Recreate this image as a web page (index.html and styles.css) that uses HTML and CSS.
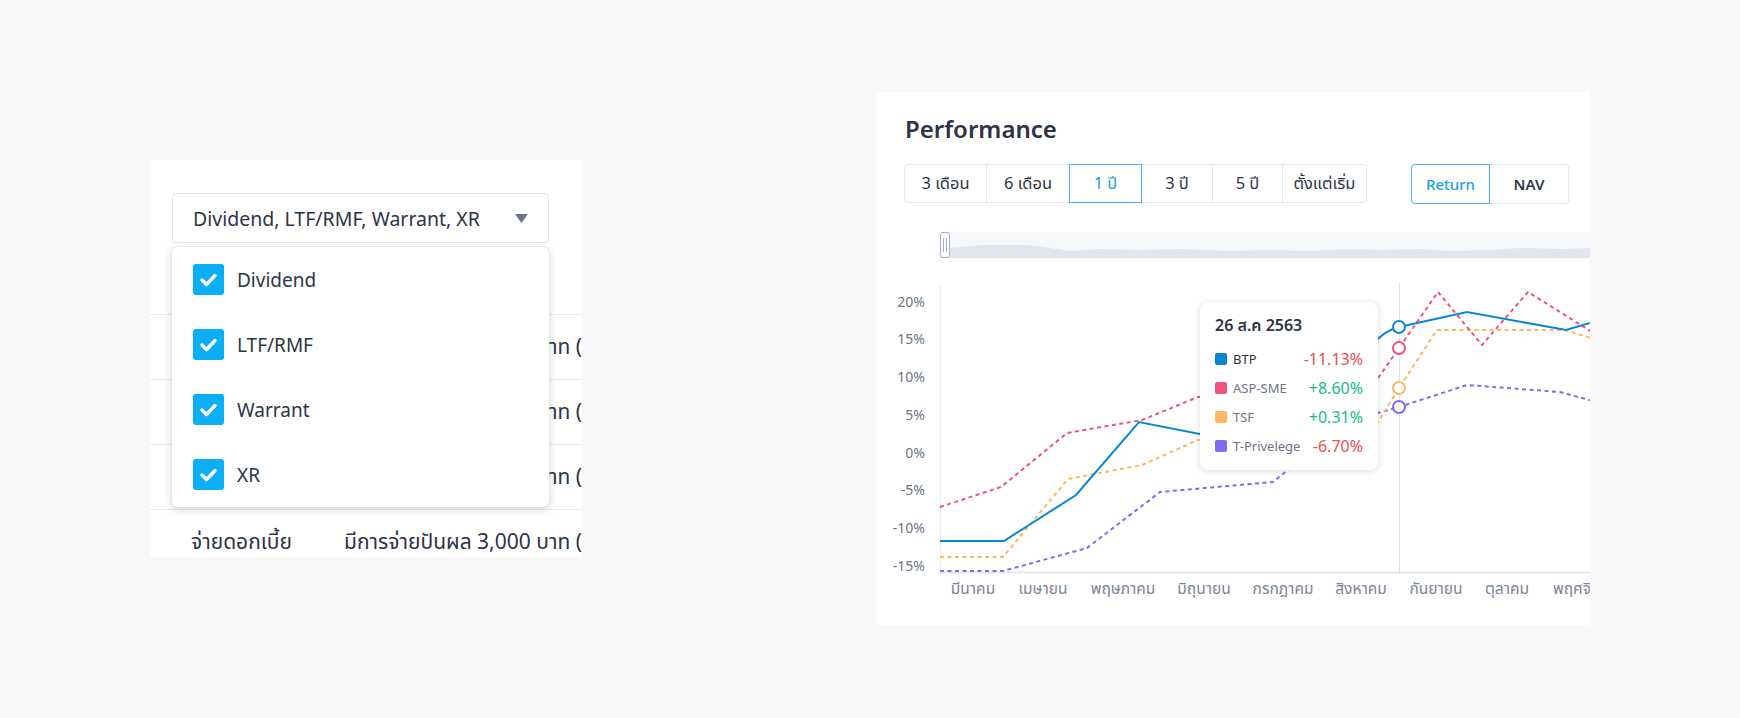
FILE: index.html
```html
<!DOCTYPE html>
<html lang="th">
<head>
<meta charset="utf-8">
<title>Filter and Performance</title>
<link rel="stylesheet" href="styles.css">
</head>
<body>
<div class="stage">
  <section class="filter-card">
    <div class="filter-head">
      <div class="select">
        <span class="select-text">Dividend, LTF/RMF, Warrant, XR</span>
        <svg class="caret" width="13" height="9" viewBox="0 0 13 9"><polygon points="0,0 13,0 6.5,9" fill="#6b7386"/></svg>
      </div>
    </div>
    <div class="row"><span class="row-label">จ่ายปันผล</span><span class="row-value">มีการจ่ายปันผล 3,000 บาท (0.50 บาท/หุ้น)</span></div>
    <div class="row"><span class="row-label">จ่ายปันผล</span><span class="row-value">มีการจ่ายปันผล 3,000 บาท (0.50 บาท/หุ้น)</span></div>
    <div class="row"><span class="row-label">จ่ายปันผล</span><span class="row-value">มีการจ่ายปันผล 3,000 บาท (0.50 บาท/หุ้น)</span></div>
    <div class="row"><span class="row-label">จ่ายดอกเบี้ย</span><span class="row-value">มีการจ่ายปันผล 3,000 บาท (0.50 บาท/หุ้น)</span></div>

    <div class="menu">
      <div class="menu-item"><span class="check"><svg width="31" height="31" viewBox="0 0 31 31"><path d="M9 16 L13.5 20.5 L22 11.5" fill="none" stroke="#fff" stroke-width="3.4" stroke-linecap="round" stroke-linejoin="round"/></svg></span><span>Dividend</span></div>
      <div class="menu-item"><span class="check"><svg width="31" height="31" viewBox="0 0 31 31"><path d="M9 16 L13.5 20.5 L22 11.5" fill="none" stroke="#fff" stroke-width="3.4" stroke-linecap="round" stroke-linejoin="round"/></svg></span><span>LTF/RMF</span></div>
      <div class="menu-item"><span class="check"><svg width="31" height="31" viewBox="0 0 31 31"><path d="M9 16 L13.5 20.5 L22 11.5" fill="none" stroke="#fff" stroke-width="3.4" stroke-linecap="round" stroke-linejoin="round"/></svg></span><span>Warrant</span></div>
      <div class="menu-item"><span class="check"><svg width="31" height="31" viewBox="0 0 31 31"><path d="M9 16 L13.5 20.5 L22 11.5" fill="none" stroke="#fff" stroke-width="3.4" stroke-linecap="round" stroke-linejoin="round"/></svg></span><span>XR</span></div>
    </div>
  </section>

  <section class="perf-card">
    <h2 class="perf-title">Performance</h2>
    <div class="controls">
      <div class="seg">
        <button class="seg-btn">3 เดือน</button>
        <button class="seg-btn">6 เดือน</button>
        <button class="seg-btn active">1 ปี</button>
        <button class="seg-btn">3 ปี</button>
        <button class="seg-btn">5 ปี</button>
        <button class="seg-btn">ตั้งแต่เริ่ม</button>
      </div>
      <div class="toggle">
        <button class="tog-btn active">Return</button>
        <button class="tog-btn">NAV</button>
      </div>
    </div>

    <svg class="chart" width="714" height="393" viewBox="876 232 714 393">
      <!-- navigator -->
      <rect x="940" y="232" width="660" height="26" fill="#f5f7fb"/>
      <path d="M949,258 L949,248 L980,245 L1027,245 L1050,248 L1070,251 L1100,249 L1140,250 L1180,249 L1230,251 L1270,250 L1310,251 L1350,249 L1380,250 L1420,249 L1450,251 L1490,250 L1520,248 L1560,249 L1600,248 L1600,258 Z" fill="#e2e5ed"/>
      <rect x="940.5" y="232.5" width="9" height="25" rx="2.5" fill="#fff" stroke="#a7aec0"/>
      <line x1="943.5" y1="238" x2="943.5" y2="252" stroke="#a7aec0"/>
      <line x1="946.5" y1="238" x2="946.5" y2="252" stroke="#a7aec0"/>

      <!-- axes -->
      <line x1="940.5" y1="283" x2="940.5" y2="572" stroke="#eceef3"/>
      <line x1="940" y1="572.5" x2="1600" y2="572.5" stroke="#e6e8ee" stroke-width="2"/>
      <g class="ylab" text-anchor="end">
        <text x="925" y="307">20%</text>
        <text x="925" y="344">15%</text>
        <text x="925" y="382">10%</text>
        <text x="925" y="420">5%</text>
        <text x="925" y="458">0%</text>
        <text x="925" y="495">-5%</text>
        <text x="925" y="533">-10%</text>
        <text x="925" y="571">-15%</text>
      </g>
      <g class="xlab" text-anchor="middle">
        <text x="973" y="594">มีนาคม</text>
        <text x="1043" y="594">เมษายน</text>
        <text x="1123" y="594">พฤษภาคม</text>
        <text x="1204" y="594">มิถุนายน</text>
        <text x="1283" y="594">กรกฎาคม</text>
        <text x="1361" y="594">สิงหาคม</text>
        <text x="1436" y="594">กันยายน</text>
        <text x="1507" y="594">ตุลาคม</text>
        <text x="1553" y="594" text-anchor="start">พฤศจิกายน</text>
      </g>

      <!-- crosshair -->
      <line x1="1399.5" y1="283" x2="1399.5" y2="572" stroke="#dfe1e6"/>

      <!-- series -->
      <path d="M940,571 L1003,571 L1087,548 L1160,492 L1273,482 L1300,460 L1378,413 L1399,407 L1467,385 L1560,392 L1600,403" fill="none" stroke="#8169f4" stroke-width="2" stroke-dasharray="4 3.5"/>
      <path d="M940,557 L1003,557 L1068,479 L1142,465 L1198,440 L1300,440 L1378,422 L1399,388 L1437,330 L1565,330 L1600,341" fill="none" stroke="#ffb661" stroke-width="2" stroke-dasharray="4 3.5"/>
      <path d="M940,507 L1001,487 L1067,433 L1142,420 L1198,397 L1300,400 L1360,404 L1399,348 L1438,292 L1482,345 L1528,292 L1600,337" fill="none" stroke="#f2527e" stroke-width="2" stroke-dasharray="4 3.5"/>
      <path d="M940,541 L1004,541 L1076,495 L1139,422 L1230,440 L1372,345 Q1385,330 1399,327 L1467,312 L1566,330 L1600,320" fill="none" stroke="#0a87d3" stroke-width="2"/>

      <!-- markers -->
      <circle cx="1399" cy="407" r="6" fill="#fff" stroke="#8169f4" stroke-width="2"/>
      <circle cx="1399" cy="388" r="6" fill="#fff" stroke="#ffb661" stroke-width="2"/>
      <circle cx="1399" cy="348" r="6" fill="#fff" stroke="#f2527e" stroke-width="2"/>
      <circle cx="1399" cy="327" r="6" fill="#fff" stroke="#0a87d3" stroke-width="2"/>
    </svg>

    <div class="tooltip">
      <div class="tip-title">26 ส.ค 2563</div>
      <div class="tip-row"><span class="sw sw-btp"></span><span class="tip-name strong">BTP</span><span class="tip-val neg">-11.13%</span></div>
      <div class="tip-row"><span class="sw sw-asp"></span><span class="tip-name">ASP-SME</span><span class="tip-val pos">+8.60%</span></div>
      <div class="tip-row"><span class="sw sw-tsf"></span><span class="tip-name">TSF</span><span class="tip-val pos">+0.31%</span></div>
      <div class="tip-row"><span class="sw sw-tp"></span><span class="tip-name">T-Privelege</span><span class="tip-val neg">-6.70%</span></div>
    </div>
  </section>
</div>
</body>
</html>
```

FILE: styles.css
```css
* { box-sizing: border-box; margin: 0; padding: 0; }

html, body {
  width: 1740px;
  height: 718px;
  overflow: hidden;
}

body {
  background: #f9f9f9;
  font-family: "Noto Sans", "Noto Sans Thai", "Noto Sans Thai UI", sans-serif;
  color: #2d3446;
}

.stage {
  display: flex;
  align-items: flex-start;
  padding: 92px 0 0 150px;
  gap: 294px;
}

/* ---------- left: filter card ---------- */
.filter-card {
  margin-top: 68px;
  width: 432px;
  height: 397px;
  background: #fff;
  position: relative;
  overflow: hidden;
}

.filter-head {
  height: 154px;
  padding: 33px 0 0 22px;
}

.select {
  width: 377px;
  height: 50px;
  border: 1px solid #e2e5eb;
  border-radius: 4px;
  display: flex;
  align-items: center;
  justify-content: space-between;
  padding: 0 20px 0 20px;
  font-size: 19.5px;
  color: #2d3446;
}

.caret { display: block; }

.row {
  height: 65px;
  border-top: 1px solid #e9ebf0;
  display: flex;
  align-items: center;
  white-space: nowrap;
  font-size: 21px;
  color: #2d3446;
}

.row-label {
  flex: none;
  width: 194px;
  padding-left: 41px;
}

.row-value { flex: none; }

.menu {
  position: absolute;
  left: 22px;
  top: 87px;
  width: 377px;
  background: #fff;
  border-radius: 6px;
  box-shadow: 0 2px 8px rgba(30, 40, 60, 0.22), 0 0 1px rgba(30, 40, 60, 0.15);
}

.menu-item {
  height: 65px;
  display: flex;
  align-items: center;
  padding-left: 21px;
  gap: 13px;
  font-size: 19px;
  color: #2d3446;
}

.check {
  width: 31px;
  height: 31px;
  border-radius: 3px;
  background: #0aaef4;
  display: flex;
}

/* ---------- right: performance card ---------- */
.perf-card {
  width: 714px;
  height: 533px;
  background: #fff;
  position: relative;
  overflow: hidden;
}

.perf-title {
  padding: 21px 0 0 29px;
  font-size: 24px;
  line-height: 32px;
  font-weight: 600;
  color: #2b3344;
}

.controls {
  display: flex;
  align-items: flex-start;
  gap: 44px;
  padding-left: 28px;
  margin-top: 19px;
  height: 40px;
}

.seg { display: flex; }

.seg-btn, .tog-btn {
  font-family: inherit;
  background: #fff;
  border: 1px solid #e3e6ec;
  color: #2f3747;
  font-size: 15px;
  display: flex;
  align-items: center;
  justify-content: center;
  position: relative;
}

.seg-btn {
  height: 39px;
  margin-left: -1px;
  font-size: 16.5px;
}

.seg-btn:first-child { margin-left: 0; border-radius: 4px 0 0 4px; width: 83px; }
.seg-btn:nth-child(2) { width: 84px; }
.seg-btn:nth-child(3) { width: 73px; }
.seg-btn:nth-child(4) { width: 72px; }
.seg-btn:nth-child(5) { width: 71px; }
.seg-btn:last-child { border-radius: 0 4px 4px 0; width: 85px; }

.seg-btn.active {
  border-color: #47b3ee;
  color: #1c9fe3;
  z-index: 1;
}

.toggle { display: flex; }

.tog-btn {
  width: 79px;
  height: 40px;
  font-weight: 600;
}

.tog-btn:first-child { border-radius: 4px 0 0 4px; }
.tog-btn:last-child { border-radius: 0 4px 4px 0; border-left: none; }

.tog-btn.active {
  border-color: #47b3ee;
  color: #1c9fe3;
  font-weight: 500;
}

.chart {
  display: block;
  margin-top: 28px;
}

.ylab text {
  font-family: "Noto Sans", sans-serif;
  font-size: 14px;
  fill: #6d7587;
}

.xlab text {
  font-family: "Noto Sans", "Noto Sans Thai", sans-serif;
  font-size: 15.5px;
  fill: #7c8597;
}

.tooltip {
  position: absolute;
  left: 324px;
  top: 210px;
  width: 178px;
  height: 168px;
  background: #fff;
  border-radius: 8px;
  box-shadow: 0 1px 6px rgba(30, 40, 60, 0.16);
  padding: 11px 15px 0 15px;
}

.tip-title {
  font-size: 16px;
  line-height: 24px;
  font-weight: 600;
  color: #2b3344;
  margin-bottom: 7px;
}

.tip-row {
  height: 29px;
  display: flex;
  align-items: center;
}

.sw {
  width: 12px;
  height: 12px;
  border-radius: 2px;
  margin-right: 6px;
  flex: none;
}

.sw-btp { background: #0a87d3; }
.sw-asp { background: #f2527e; }
.sw-tsf { background: #ffb661; }
.sw-tp { background: #8169f4; }

.tip-name {
  font-size: 13px;
  color: #6c7486;
  flex: 1;
}

.tip-name.strong { color: #2b3344; }

.tip-val {
  font-size: 16px;
}

.neg { color: #f04d4d; }
.pos { color: #16bb88; }
```
